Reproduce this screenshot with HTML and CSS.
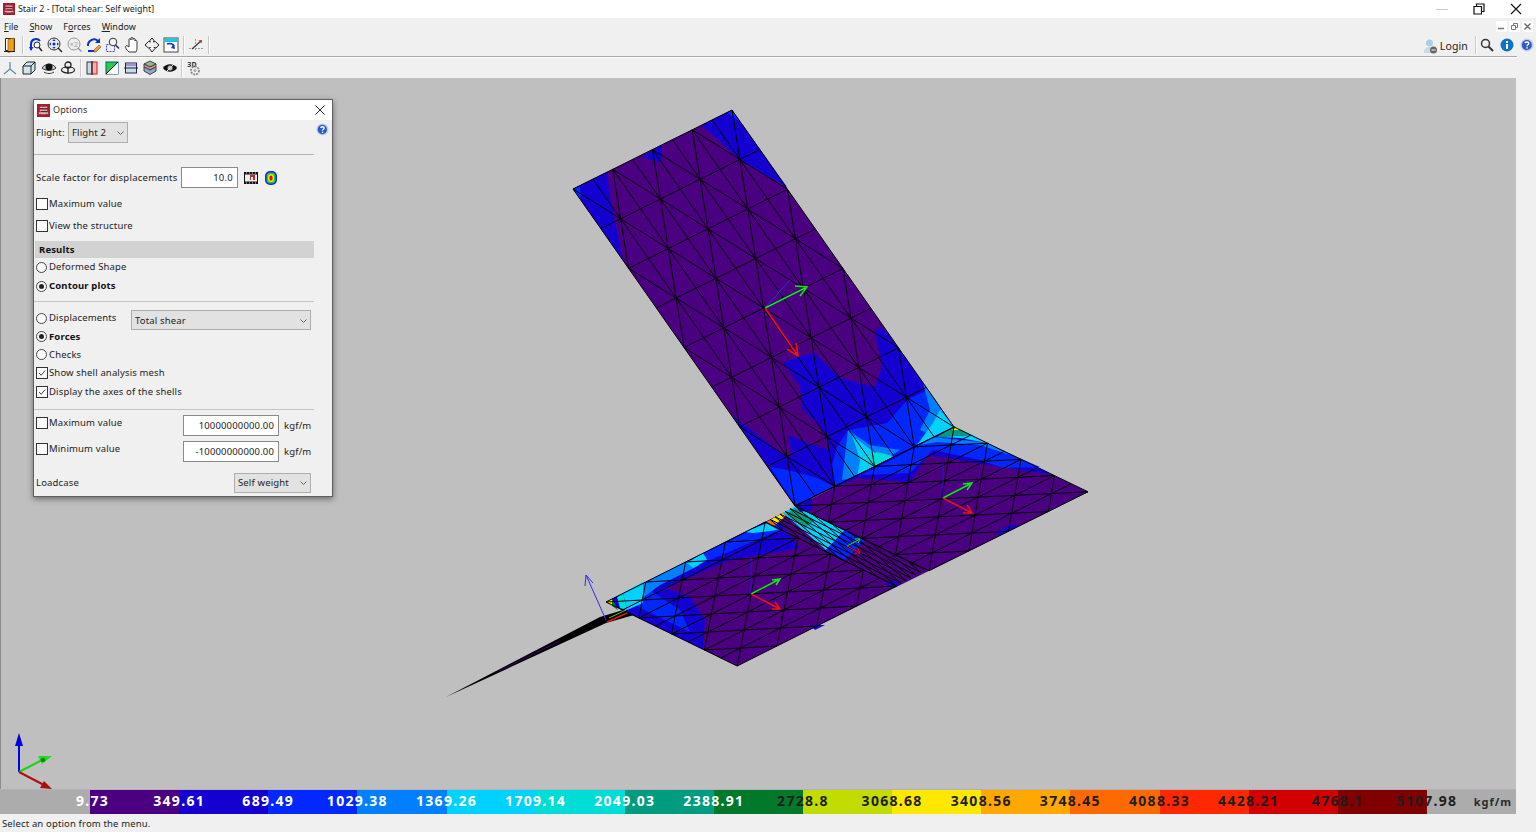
FILE: index.html
```html
<!DOCTYPE html>
<html lang="en">
<head>
<meta charset="utf-8">
<title>Stair 2 - [Total shear: Self weight]</title>
<link rel="stylesheet" href="styles.css">
</head>
<body>
<svg class="defs" aria-hidden="true">
  <symbol id="i-app" viewBox="0 0 14 14">
    <rect width="14" height="14" fill="#a91c2c"/>
    <path d="M3 3h8v2H3zM3 6h8v2H3zM2 9h10v2H2z" fill="#d9b9bb"/>
    <path d="M3 5h8M4 8h7M3 11h1M10 11h1" stroke="#521017" fill="none"/>
  </symbol>
  <symbol id="i-help" viewBox="0 0 14 14">
    <circle cx="7" cy="7" r="6.5" fill="#c3cde6"/>
    <circle cx="6.8" cy="7" r="5" fill="#2a5cc8"/>
    <path d="M5 5.2c.3-1.600 3.800-1.600 3.800.3 0 1.300-1.800 1.300-1.800 2.700" stroke="#fff" stroke-width="1.400" fill="none"/>
    <rect x="6.300" y="9.200" width="1.400" height="1.400" fill="#fff"/>
  </symbol>
  <symbol id="i-check" viewBox="0 0 12 12">
    <path d="M2.500 6l2.500 2.700L9.800 3" fill="none" stroke="#333" stroke-width="1.100"/>
  </symbol>
  <symbol id="i-chev" viewBox="0 0 9 6">
    <path d="M1.500 1.500l3 3 3-3" fill="none" stroke="#666" stroke-width="1"/>
  </symbol>
</svg>

<header class="titlebar">
  <svg class="app-icon"><use href="#i-app"/></svg>
  <span class="title-text">Stair 2 - [Total shear: Self weight]</span>
  <div class="win-controls">
    <span class="win-btn"><svg width="12" height="12" viewBox="0 0 12 12"><path d="M0 6.500h12" stroke="#c8c8c8"/></svg></span>
    <span class="win-btn"><svg width="12" height="12" viewBox="0 0 12 12"><path d="M1 3.500h7.500V11H1zM3.500 3V1H11v7.500H9" fill="none" stroke="#111" stroke-width="1.200"/></svg></span>
    <span class="win-btn"><svg width="12" height="12" viewBox="0 0 12 12"><path d="M1 1l10 10M11 1L1 11" stroke="#111" stroke-width="1.100"/></svg></span>
  </div>
</header>

<nav class="menubar">
  <span class="menu-item"><u>F</u>ile</span>
  <span class="menu-item"><u>S</u>how</span>
  <span class="menu-item">F<u>o</u>rces</span>
  <span class="menu-item"><u>W</u>indow</span>
  <div class="mdi-controls">
    <span class="mdi-btn"><svg width="7" height="7" viewBox="0 0 7 7"><path d="M0 5.500h6" stroke="#777" stroke-width="1.500"/></svg></span>
    <span class="mdi-btn"><svg width="7" height="7" viewBox="0 0 7 7"><path d="M.5 2.500h4v4h-4zM2.500 2V.5h4v4H5" fill="none" stroke="#777"/></svg></span>
    <span class="mdi-btn"><svg width="7" height="7" viewBox="0 0 7 7"><path d="M.5.500l6 6M6.500.500l-6 6" stroke="#666" stroke-width="1.300"/></svg></span>
  </div>
</nav>

<div class="toolbar toolbar-one">
  <span class="tool"><svg width="16" height="16" viewBox="0 0 16 16"><path d="M3.500 1.500h9v12h-9z" fill="#fff" stroke="#222"/><path d="M6 2.500l6-1.500v13l-6 1.500z" fill="#f0a020" stroke="#a06000" stroke-width=".8"/><path d="M2 14.500h11" stroke="#222"/></svg></span>
  <span class="tool-sep"></span>
  <span class="tool"><svg width="16" height="16" viewBox="0 0 16 16"><path d="M3 13V7a5 5 0 0 1 9-3" fill="none" stroke="#0a2fd0" stroke-width="2"/><path d="M1 10l2 4 2.500-4z" fill="#0a2fd0"/><circle cx="9" cy="8" r="3" fill="#fff" stroke="#222"/><path d="M11 10.500l3 3.500" stroke="#222" stroke-width="1.500"/></svg></span>
  <span class="tool"><svg width="16" height="16" viewBox="0 0 16 16"><circle cx="7" cy="7" r="6" fill="#e8e8e8" stroke="#333"/><path d="M7 2l1.500 2h-3zM7 12l1.500-2h-3zM2 7l2-1.500v3zM12 7l-2-1.500v3z" fill="#0a2fd0"/><circle cx="7" cy="7" r="1.500" fill="#0a2fd0"/><path d="M11 11l4 4" stroke="#222" stroke-width="1.500"/></svg></span>
  <span class="tool"><svg width="16" height="16" viewBox="0 0 16 16"><circle cx="7" cy="7" r="6" fill="#eee" stroke="#999"/><text x="7" y="9.500" class="tool-glyph">×2</text><path d="M11 11l3.500 3.500" stroke="#999" stroke-width="1.500"/></svg></span>
  <span class="tool"><svg width="16" height="16" viewBox="0 0 16 16"><path d="M2 9a6 6 0 0 1 10-5" fill="none" stroke="#0a2fd0" stroke-width="2"/><path d="M14 1v5h-5z" fill="#0a2fd0"/><path d="M2 14h6" stroke="#0a2fd0" stroke-width="2"/><path d="M8 13l5-5 2 2-5 5H8z" fill="#e0a040" stroke="#a05020" stroke-width=".6"/></svg></span>
  <span class="tool"><svg width="16" height="16" viewBox="0 0 16 16"><rect x="1.500" y="7.500" width="8" height="7" fill="none" stroke="#3a50d0" stroke-dasharray="2 1"/><circle cx="8" cy="5" r="3.800" fill="#f4f4f4" stroke="#333"/><path d="M10.500 8l3.500 3.500" stroke="#333" stroke-width="1.600"/></svg></span>
  <span class="tool"><svg width="16" height="16" viewBox="0 0 16 16"><path d="M5 15c-2-2-4-4-3.500-5.500S4 9 5 10V3c0-2 2-2 2 0V1.500c0-1.500 2-1.500 2 0V2.500c0-1.500 2-1.500 2 0V4c0-1.500 2-1 2 .5V11c0 2-1 4-1 4z" fill="#fff" stroke="#222" stroke-width=".9"/></svg></span>
  <span class="tool"><svg width="16" height="16" viewBox="0 0 16 16"><path d="M8 1l2.300 3-1 1 2-.5L15 8l-3 3-2-.5 1 1L8 15l-2.500-3.500 1-1-2 .5L1 8l3.500-3.500 2 .5-1-1z" fill="#f2f2f2" stroke="#222"/></svg></span>
  <span class="tool"><svg width="16" height="16" viewBox="0 0 16 16"><rect x="1" y="1" width="14" height="14" fill="#fff" stroke="#444"/><rect x="1.500" y="1.500" width="13" height="3.500" fill="#16c8e8"/><path d="M4 7c3-1 6 0 7 2" fill="none" stroke="#0a2fd0" stroke-width="1.800"/><path d="M8 11l4 1-1-5z" fill="#0a2fd0"/></svg></span>
  <span class="tool-sep tool-sep-b"></span>
  <span class="tool"><svg width="16" height="16" viewBox="0 0 16 16"><path d="M1 11.500h14" stroke="#999" stroke-dasharray="2 1"/><path d="M7.500 2v12" stroke="#999" stroke-dasharray="2 1"/><path d="M4 12l9-8" stroke="#333" stroke-width="1.200"/><path d="M10.500 3.500L14 3l-.5 3.500z" fill="#d02020"/></svg></span>
  <span class="tool-sep tool-sep-b"></span>

  <div class="toolbar-right">
    <svg class="login-icon" width="15" height="16" viewBox="0 0 15 16"><circle cx="6.500" cy="5" r="3.500" fill="#a8d0e4"/><path d="M1 15c0-5 3-6 5.500-6s5 1 5.500 3l-1 3z" fill="#c2dcea"/><circle cx="10.500" cy="12" r="3.500" fill="#666"/><path d="M8.500 12h4" stroke="#fff"/></svg>
    <span class="login-text">Login</span>
    <span class="tool-sep right-sep"></span>
    <svg class="right-icon" width="14" height="14" viewBox="0 0 14 14"><circle cx="5.500" cy="5.500" r="4" fill="none" stroke="#333" stroke-width="1.500"/><path d="M8.500 8.500l4.500 4.500" stroke="#333" stroke-width="2"/></svg>
    <svg class="right-icon" width="14" height="14" viewBox="0 0 14 14"><circle cx="7" cy="7" r="6.500" fill="#0f73c4"/><rect x="6" y="3" width="2" height="2" fill="#fff"/><rect x="6" y="6" width="2" height="5" fill="#fff"/></svg>
    <svg class="right-icon" width="14" height="14"><use href="#i-help"/></svg>
  </div>
</div>
<div class="toolbar-rule"></div>

<div class="toolbar toolbar-two">
  <span class="tool"><svg width="16" height="16" viewBox="0 0 16 16"><path d="M8 9V2M8 9l-6 5M8 9l6 5" fill="none" stroke="#5b8fa8" stroke-width="1.300"/></svg></span>
  <span class="tool"><svg width="16" height="16" viewBox="0 0 16 16"><path d="M2 6l4-4h8v8l-4 4H2z" fill="#cfe4ee" stroke="#222"/><path d="M2 6h8v8M10 6l4-4" fill="none" stroke="#222"/></svg></span>
  <span class="tool"><svg width="16" height="16" viewBox="0 0 16 16"><path d="M1 8c3-5 11-5 14 0-3 3-11 3-14 0z" fill="#d0d0d0" stroke="#333"/><circle cx="8" cy="7" r="3.500" fill="#111"/><path d="M3 12c3 2 7 2 10 0" fill="none" stroke="#333"/></svg></span>
  <span class="tool"><svg width="16" height="16" viewBox="0 0 16 16"><circle cx="8" cy="5" r="3" fill="none" stroke="#222" stroke-width="1.300"/><ellipse cx="8" cy="10" rx="6.500" ry="3" fill="none" stroke="#222" stroke-width="1.200"/><path d="M8 7v7" stroke="#222" stroke-width="1.400"/></svg></span>
  <span class="tool-sep tool-sep-c"></span>
  <span class="tool"><svg width="16" height="16" viewBox="0 0 16 16"><rect x="3" y="2" width="5" height="12" fill="#c8dce8" stroke="#335"/><rect x="8" y="2" width="5" height="12" fill="#f4b0b0" stroke="#d01818"/><path d="M8 1v14" stroke="#222"/></svg></span>
  <span class="tool"><svg width="16" height="16" viewBox="0 0 16 16"><rect x="2" y="2" width="12" height="12" fill="#22d048" stroke="#157"/><path d="M14 2L2 14h12z" fill="#fff"/><path d="M14 2L2 14" stroke="#111"/></svg></span>
  <span class="tool"><svg width="16" height="16" viewBox="0 0 16 16"><rect x="2.500" y="3" width="11" height="10" fill="#c4dce8" stroke="#225"/><rect x="3" y="3.500" width="10" height="2.500" fill="#a090d8"/><path d="M1 8h14" stroke="#222"/></svg></span>
  <span class="tool"><svg width="16" height="16" viewBox="0 0 16 16"><path d="M8 1l6 3-6 3-6-3z" fill="#90b890" stroke="#444"/><path d="M2 4v3l6 3 6-3V4l-6 3z" fill="#d89090" stroke="#444"/><path d="M2 7v4l6 3.500 6-3.500V7l-6 3z" fill="#8aa8c8" stroke="#444"/></svg></span>
  <span class="tool"><svg width="16" height="16" viewBox="0 0 16 16"><path d="M1 8c3-5 11-5 14 0-3 5-11 5-14 0z" fill="#111"/><circle cx="8" cy="8" r="2.500" fill="#bbb"/><path d="M3 13L13 3" stroke="#eee"/></svg></span>
  <span class="tool-sep tool-sep-c"></span>
  <span class="tool"><svg width="16" height="16" viewBox="0 0 16 16"><text x="6" y="7" class="tool-3d">3D</text><circle cx="9" cy="10.500" r="4" fill="none" stroke="#888" stroke-width="1.800" stroke-dasharray="2 1"/><circle cx="9" cy="10.500" r="1.500" fill="#aaa"/></svg></span>
</div>

<main class="workspace">
  <div class="viewport">
    <svg class="scene" width="1516" height="711" viewBox="0 78 1516 711" aria-label="Stair contour plot">
      <!-- upper flight -->
      <polygon class="c1" points="573,189 732,110 954,427 795,506"/>
      <polygon class="c2" points="573,189 607,172 610,197 623,260"/>
      <polygon class="c3" points="573,189 580,186 581,200"/>
      <polygon class="c2" points="642,157 662,145 662,163"/>
      <polygon class="c2" points="702,125 732,110 787,187 740,160"/>
      <polygon class="c3" points="727,113 732,110 740,122"/>
      <polygon class="c2" points="733,416 788,458 792,455 788,435 808,443 830,450 823,430 802,408 800,385 783,363 798,357 815,353 840,378 875,387 882,367 875,330 883,328 900,350 954,427 795,506"/>
      <polygon class="c3" points="770,467 795,505 835,487 815,477 787,470"/>
      <polygon class="c3" points="835,487 857,477 848,430 837,447 832,465"/>
      <polygon class="c3" points="848,430 887,423 907,400 927,390 937,423 917,445 857,477"/>
      <polygon class="c4" points="842,480 848,430 870,445 900,450 857,477"/>
      <polygon class="c4" points="923,383 954,427 935,437 920,430 930,410"/>
      <polygon class="c5" points="857,477 860,460 852,435 867,447 880,457 893,457 877,467"/>
      <polygon class="c5" points="917,445 933,437 954,427 940,410 933,423"/>
      <polygon class="c6" points="863,458 877,452 893,456 875,466"/>

      <!-- landing -->
      <polygon class="c1" points="606,602 954,427 1088,492 737,666"/>
      <polygon class="c2" points="606,602 775,517 800,548 730,560 665,588 690,597 705,620 703,649"/>
      <polygon class="c3" points="620,595 775,518 780,530 710,560 670,578 650,590 680,610 690,632 640,608"/>
      <polygon class="c4" points="625,592 690,560 700,565 660,585 640,600"/>
      <polygon class="c5" points="623,593 643,582 643,603 627,610"/>
      <polygon class="c5" points="687,563 703,553 707,560 693,568"/>
      <polygon class="c5" points="745,532 767,523 778,530 753,533"/>
      <polygon class="c8" points="606,602 612,599 618,610 612,606"/>
      <polygon class="c10" points="606,602 612,599 612,606"/>
      <polygon class="c6" points="617,597 623,593 627,610 620,608"/>
      <polygon class="c12" points="766,522 770,520 776,525 772,526"/>
      <polygon class="c10" points="770,520 783,513 786,516 776,524"/>
      <polygon class="c5" points="783,513 795,506 845,530 826,550"/>
      <polygon class="c7" points="786,514 795,508 815,520 805,528"/>
      <polygon class="c3" points="826,550 845,530 865,540 845,560"/>
      <polygon class="c2" points="795,506 954,427 1053,475 977,463 928,455 910,482 857,478 812,497 812,510 800,512"/>
      <polygon class="c3" points="857,477 917,447 937,437 983,442 1040,467 1003,468 980,460 933,450 910,473 863,475"/>
      <polygon class="c4" points="920,445 933,437 987,443 1010,455 980,445 937,442"/>
      <polygon class="c5" points="937,437 972,435 987,443 960,438"/>
      <polygon class="c7" points="937,437 954,426 972,435"/>
      <polygon class="c10" points="952,430 956,427 961,430"/>
      <polygon class="c2" points="995,533 1010,525 1020,525 1000,535"/>
      <polygon class="c2" points="885,583 893,588 900,584 892,580"/>
      <polygon class="c2" points="810,625 825,625 815,630"/>
      <g id="mesh" class="mesh"></g>

      <!-- edge sliver -->
      <polygon class="sliver" points="446,697 600,617 623,610 634,615 606,623"/>
      <path class="sliver-hint" d="M500 670.500L560 641"/>

      <!-- local axes -->
      <g class="axes-local">
        <path class="ax-b" d="M765 308L790 280"/>
        <path class="ax-g bold" d="M765 308L807 287M795 286l12 1-7 9"/>
        <path class="ax-r bold" d="M765 308L798 356M796 343l2 13-11-7"/>
        <path class="ax-b thin" d="M943 498V463"/>
        <path class="ax-g bold" d="M943 498L972 483M963 484l9-1-5 7"/>
        <path class="ax-r bold" d="M943 498L972 513M967 505l5 8-9 0"/>
        <path class="ax-b thin" d="M847 546V530"/>
        <path class="ax-g" d="M847 546L860 539M855 539l5 0-2 4"/>
        <path class="ax-r" d="M847 546L860 553M858 549l2 4-5 0"/>
        <path class="ax-b thin" d="M751 594V558"/>
        <path class="ax-g bold" d="M751 594L780 579M772 580l8-1-4 6"/>
        <path class="ax-r bold" d="M751 594L780 609M775 602l5 7-8 0"/>
        <path class="ax-r bold" d="M607 622L627 613"/>
        <path class="ax-g" d="M609 618L626 610"/>
        <path class="ax-b" d="M606 620L586 575M585 586l1-11 7 8"/>
      </g>

      <!-- global axes -->
      <path class="gax gax-b" d="M19 772V738"/>
      <path class="gax-bf" d="M15 746L19 733L23 746z"/>
      <path class="gax gax-g" d="M19 772L44 759"/>
      <path class="gax-gf" d="M38 756L52 756L42 764z"/>
      <ellipse class="gax-gd" cx="43" cy="760" rx="2.500" ry="2"/>
      <path class="gax gax-r" d="M19 772L44 785"/>
      <path class="gax-rf" d="M40 788L44 781L52 789z"/>
    </svg>

    <section class="dialog">
      <div class="dialog-title">
        <svg class="app-icon dialog-icon"><use href="#i-app"/></svg>
        <span class="dialog-title-text">Options</span>
        <svg class="dialog-close" width="10" height="10" viewBox="0 0 10 10"><path d="M.5.500l9 9M9.500.500l-9 9" stroke="#222" stroke-width="1"/></svg>
      </div>
      <svg class="dialog-help" width="13" height="13"><use href="#i-help"/></svg>
      <div class="dialog-body">
        <div class="row row-flight">
          <span class="flight-label">Flight:</span>
          <div class="combo combo-flight"><span>Flight 2</span><svg width="9" height="6"><use href="#i-chev"/></svg></div>
        </div>
        <div class="rule rule-a"></div>
        <div class="row row-scale">
          <span class="scale-label">Scale factor for displacements</span>
          <div class="field field-scale">10.0</div>
          <svg class="film-icon" width="14" height="12" viewBox="0 0 14 12"><rect width="14" height="12" fill="#111"/><rect x="1" y="2.500" width="12" height="7" fill="#eee"/><path d="M2 1h1M5 1h1M8 1h1M11 1h1M2 11h1M5 11h1M8 11h1M11 11h1" stroke="#eee"/><path d="M6 3h5v5H9V5H7v3H6z" fill="#b03030"/></svg>
          <svg class="contour-icon" width="12" height="14" viewBox="0 0 12 14"><rect width="12" height="14" rx="5" fill="#0a30e0"/><rect x="1.500" y="1.500" width="9" height="11" rx="4" fill="#20c840"/><rect x="3" y="3" width="6" height="8" rx="3" fill="#f0e000"/><rect x="4.500" y="4.500" width="3" height="5" rx="1.500" fill="#e01010"/></svg>
        </div>
        <label class="opt opt-max"><span class="chk"></span>Maximum value</label>
        <label class="opt opt-view"><span class="chk"></span>View the structure</label>
        <div class="results-band">Results</div>
        <label class="opt"><span class="radio"></span>Deformed Shape</label>
        <label class="opt opt-contour strong"><span class="radio on"></span>Contour plots</label>
        <div class="rule rule-b"></div>
        <div class="group">
          <div class="group-left">
            <label class="opt"><span class="radio"></span>Displacements</label>
            <label class="opt strong"><span class="radio on"></span>Forces</label>
            <label class="opt"><span class="radio"></span>Checks</label>
            <label class="opt"><span class="chk"><svg width="10" height="10"><use href="#i-check"/></svg></span>Show shell analysis mesh</label>
            <label class="opt"><span class="chk"><svg width="10" height="10"><use href="#i-check"/></svg></span>Display the axes of the shells</label>
          </div>
          <div class="combo combo-result"><span>Total shear</span><svg width="9" height="6"><use href="#i-chev"/></svg></div>
        </div>
        <div class="rule rule-c"></div>
        <div class="row-limit row-limit-max">
          <label class="opt limit-label"><span class="chk"></span>Maximum value</label>
          <div class="field field-limit">10000000000.00</div>
          <span class="unit">kgf/m</span>
        </div>
        <div class="row-limit row-limit-min">
          <label class="opt limit-label"><span class="chk"></span>Minimum value</label>
          <div class="field field-limit">-10000000000.00</div>
          <span class="unit">kgf/m</span>
        </div>
        <div class="row row-load">
          <span class="load-label">Loadcase</span>
          <div class="combo combo-load"><span>Self weight</span><svg width="9" height="6"><use href="#i-chev"/></svg></div>
        </div>
      </div>
    </section>
  </div>
  <div class="right-strip"></div>
</main>

<div class="legend">
  <div class="legend-end legend-start"></div>
  <div class="seg s1"><b class="lab lab-first">9.73</b></div>
  <div class="seg s2"><b class="lab">349.61</b></div>
  <div class="seg s3"><b class="lab">689.49</b></div>
  <div class="seg s4"><b class="lab">1029.38</b></div>
  <div class="seg s5"><b class="lab">1369.26</b></div>
  <div class="seg s6"><b class="lab">1709.14</b></div>
  <div class="seg s7"><b class="lab">2049.03</b></div>
  <div class="seg s8"><b class="lab">2388.91</b></div>
  <div class="seg s9"><b class="lab dark">2728.8</b></div>
  <div class="seg s10"><b class="lab dark">3068.68</b></div>
  <div class="seg s11"><b class="lab dark">3408.56</b></div>
  <div class="seg s12"><b class="lab dark">3748.45</b></div>
  <div class="seg s13"><b class="lab dark">4088.33</b></div>
  <div class="seg s14"><b class="lab dark">4428.21</b></div>
  <div class="seg s15"><b class="lab dark">4768.1</b></div>
  <div class="legend-end legend-stop"><b class="lab dark">5107.98</b><span class="legend-unit">kgf/m</span></div>
</div>

<footer class="statusbar">Select an option from the menu.</footer>
<script src="mesh.js"></script>
</body>
</html>
```
FILE: styles.css
```css
* { box-sizing: border-box; }
html, body { margin: 0; height: 100%; }
body {
  width: 1536px; height: 832px; overflow: hidden;
  display: flex; flex-direction: column;
  background: #f0f0f0; color: #222;
  font: 9.5px/1 "Noto Sans", "Liberation Sans", sans-serif;
  letter-spacing: .15px;
}
.defs { position: absolute; width: 0; height: 0; }
.app-icon { width: 12px; height: 12px; display: block; }

.titlebar { height: 18px; background: #fff; display: flex; align-items: center; padding-left: 3px; }
.title-text { margin-left: 3px; padding-top: 1px; font-size: 8.9px; letter-spacing: 0; }
.win-controls { margin-left: auto; display: flex; padding-right: 2px; }
.win-btn { width: 37px; height: 18px; display: flex; align-items: center; justify-content: center; }

.menubar { height: 18px; display: flex; align-items: center; position: relative; padding: 0 0 2px 4px; gap: 11px; font-size: 9px; letter-spacing: 0; }
.mdi-controls { margin-left: auto; margin-right: 3px; display: flex; gap: 2px; }
.mdi-btn { width: 11px; height: 11px; background: #fff; display: flex; align-items: center; justify-content: center; }

.toolbar { height: 20px; display: flex; align-items: center; padding-left: .5px; }
.tool { width: 19.3px; height: 20px; display: flex; align-items: center; justify-content: center; flex: none; }
.tool svg { display: block; }
.tool-glyph { font: 7px "Noto Sans", sans-serif; fill: #999; text-anchor: middle; }
.tool-3d { font: bold 7px "Noto Sans", sans-serif; fill: #333; text-anchor: middle; }
.tool-sep { width: 2px; height: 18px; flex: none; border-left: 1px solid #c8c8c8; border-right: 1px solid #fff; margin: 0 2px 0 3px; }
.tool-sep-b { margin: 0 2px; }
.tool-sep-c { margin: 0 1px 0 2px; }
.toolbar-one { padding: 0 0 2px 0; }
.toolbar-right { margin-left: auto; display: flex; align-items: center; padding-right: 2px; }
.login-icon { margin-top: 2px; }
.login-text { font-size: 10.5px; margin: 3px 0 0 2px; }
.right-sep { margin: 0 3px 0 7px; }
.right-icon { margin-right: 6px; display: block; }
.right-icon:last-child { margin-right: 0; }
.toolbar-rule { height: 2px; margin-right: 19px; border-top: 1px solid #a8a8a8; border-bottom: 1px solid #fdfdfd; }

.workspace { flex: 1; display: flex; min-height: 0; }
.viewport { width: 1516px; flex: none; background: #bfbfbf; position: relative; overflow: hidden; border-left: 1px solid #8c8c8c; }
.right-strip { flex: 1; }
.scene { display: block; position: absolute; left: -1px; top: 0; }

.c1 { fill: #4b0082; } .c2 { fill: #1500d2; } .c3 { fill: #0028ff; } .c4 { fill: #0080ff; }
.c5 { fill: #00d2ff; } .c6 { fill: #00dcd6; } .c7 { fill: #009c80; } .c8 { fill: #007a2a; }
.c10 { fill: #ffe800; } .c12 { fill: #ff6a00; }
.mesh line { stroke: #000; stroke-width: 1; }
.sliver { fill: #000; }
.sliver-hint { stroke: #3c0070; stroke-width: 1; fill: none; }
.axes-local path { fill: none; stroke-width: 1; }
.ax-b { stroke: #2d2df0; }
.ax-b.thin { stroke: #2020d8; stroke-width: .8; }
.ax-g { stroke: #12e812; }
.ax-r { stroke: #f01010; }
.axes-local .bold { stroke-width: 1.500; }
.gax { fill: none; stroke-width: 2; }
.gax-b { stroke: #0000e0; } .gax-g { stroke: #12d812; } .gax-r { stroke: #b01010; }
.gax-bf { fill: #0000e0; } .gax-gf { fill: #20dc20; } .gax-gd { fill: #0a8a0a; } .gax-rf { fill: #a81010; }

.dialog {
  position: absolute; left: 32px; top: 21px; width: 300px; height: 398px;
  background: #f0f0f0; border: 1px solid #5f5f5f;
  box-shadow: 0 2px 6px rgba(0,0,0,.45);
}
.dialog-title { height: 20px; background: #fff; display: flex; align-items: center; padding-left: 3px; }
.dialog-icon { width: 13px; height: 13px; }
.dialog-title-text { margin-left: 3px; padding-bottom: 2px; color: #333; font-size: 9px; }
.dialog-close { margin-left: auto; margin-right: 7px; }
.dialog-help { position: absolute; left: 282px; top: 23px; }
.dialog-body { padding-left: 2px; }

.row { display: flex; align-items: center; }
.rule { height: 1px; width: 280px; margin-left: -2px; background: #b4b4b4; }
.rule-b, .rule-c { background: #c4c4c4; }

.combo { background: #e2e2e2; border: 1px solid #adadad; display: flex; align-items: center; justify-content: space-between; padding: 0 2px 0 3px; }
.field { background: #fff; border: 1px solid #8a8a8a; text-align: right; padding-right: 4px; line-height: 19px; }

.row-flight { height: 21px; margin-top: 2px; }
.flight-label { width: 32px; }
.combo-flight { width: 60px; height: 21px; }
.rule-a { margin-top: 11px; }
.row-scale { height: 21px; margin-top: 12px; letter-spacing: .25px; }
.scale-label { width: 145px; }
.field-scale { width: 57px; height: 21px; }
.film-icon { margin-left: 6px; }
.contour-icon { margin-left: 7px; }

.opt { display: flex; align-items: center; height: 18px; white-space: nowrap; }
.opt-max { margin-top: 7px; }
.opt-view { margin-top: 4px; }
.opt-contour { margin-top: 1px; }
.strong { font-weight: 700; color: #111; }
.chk { width: 12px; height: 12px; border: 1px solid #333; background: #fbfbfb; margin-right: 1px; flex: none; display: flex; align-items: center; justify-content: center; }
.radio { width: 11px; height: 11px; border: 1px solid #444; border-radius: 50%; background: #fbfbfb; margin: 0 2px 0 0; flex: none; position: relative; }
.radio.on::after { content: ""; position: absolute; left: 2px; top: 2px; width: 5px; height: 5px; border-radius: 50%; background: #222; }

.results-band { height: 17px; width: 279px; margin: 6px 0 0 -1px; padding-left: 4px; background: #d2d2d2; font-weight: 700; color: #111; display: flex; align-items: center; }

.rule-b { margin-top: 6px; }
.group { display: flex; margin-top: 7px; align-items: flex-start; }
.group-left { width: 95px; display: flex; flex-direction: column; gap: .4px; }
.combo-result { width: 180px; height: 20px; margin-top: 1px; padding-top: 2px; }
.rule-c { margin-top: 8px; }

.row-limit { display: flex; align-items: flex-start; height: 21px; }
.row-limit-max { margin-top: 5px; }
.row-limit-min { margin-top: 5px; }
.limit-label { width: 147px; height: 16px; }
.field-limit { width: 96px; height: 21px; }
.unit { margin-left: 5px; margin-top: 6px; }

.row-load { height: 20px; margin-top: 11px; }
.load-label { width: 198px; padding-top: 1px; }
.combo-load { width: 77px; height: 20px; }

.legend { height: 25px; width: 1516px; display: flex; flex: none; background: #acacac; border-top: 1px solid #b8b0b8; }
.legend-start { width: 90px; flex: none; }
.legend-stop { flex: 1; position: relative; }
.seg { width: 89.130px; flex: none; position: relative; }
.lab { position: absolute; left: 0; top: 11px; transform: translate(-50%, -50%); color: #fff; font: bold 14px/1 "Noto Sans", "Liberation Sans", sans-serif; letter-spacing: 1.3px; white-space: nowrap; }
.lab-first { margin-left: 2.500px; }
.lab.dark { color: #1e1e1e; }
.legend-unit { position: absolute; right: 4px; top: 6px; font: bold 11px/1 "Noto Sans", sans-serif; letter-spacing: 1px; color: #2a2a2a; }
.s1 { background: #4b0082; } .s2 { background: #1500d2; } .s3 { background: #0028ff; }
.s4 { background: #0080ff; } .s5 { background: #00d2ff; } .s6 { background: #00dcd6; }
.s7 { background: #009c80; } .s8 { background: #007a2a; } .s9 { background: #c2dc00; }
.s10 { background: #ffe800; } .s11 { background: #ffa800; } .s12 { background: #ff6a00; }
.s13 { background: #ff2800; } .s14 { background: #d20000; } .s15 { background: #800000; }

.statusbar { height: 18px; display: flex; align-items: center; padding: 2px 0 0 2px; }
```
FILE: mesh.js
```js
// Draws the analysis-mesh edges of the three shell pieces over the contour fills.
(function () {
  var NS = "http://www.w3.org/2000/svg";
  var g = document.getElementById("mesh");
  function line(a, b) {
    var l = document.createElementNS(NS, "line");
    l.setAttribute("x1", a[0].toFixed(1)); l.setAttribute("y1", a[1].toFixed(1));
    l.setAttribute("x2", b[0].toFixed(1)); l.setAttribute("y2", b[1].toFixed(1));
    g.appendChild(l);
  }
  function corner(o, u, v) {
    return function (i, j) { return [o[0] + i * u[0] + j * v[0], o[1] + i * u[1] + j * v[1]]; };
  }
  // upper flight: rows, columns and alternating diagonals
  var p = corner([573, 189], [19.875, -9.875], [27.75, 39.625]);
  for (var i = 0; i <= 8; i++) for (var j = 0; j <= 8; j++) {
    if (i < 8) line(p(i, j), p(i + 1, j));
    if (j < 8) line(p(i, j), p(i, j + 1));
    if (i < 8 && j < 8) {
      if ((i + j) % 2 === 0) line(p(i, j), p(i + 1, j + 1));
      else line(p(i + 1, j), p(i, j + 1));
    }
  }
  // landing, either side of the refined strip: no column lines inside the piece
  function landing(q) {
    for (var i = 0; i <= 8; i++) for (var j = 0; j <= 8; j++) {
      if (i < 8) line(q(i, j), q(i + 1, j));
      if (j < 8 && (i === 0 || i === 8)) line(q(i, j), q(i, j + 1));
      if (i < 8 && j < 8) {
        if ((i + j) % 2 === 0) line(q(i, j), q(i + 1, j + 1));
        else line(q(i + 1, j), q(i, j + 1));
      }
    }
  }
  landing(corner([606, 602], [19.9, -10], [16.4, 8]));
  landing(corner([795, 506], [19.875, -9.875], [16.75, 8.1]));
  // refined strip
  var n = 6, m = 7;
  for (var k = 0; k <= n; k++) {
    var ax = 765 + k * 5, ay = 522 - k * 2.67;
    line([ax, ay], [ax + 131, ay + 64]);
    if (k < n) for (var s = 0; s < m; s++) {
      var t0 = s / m, t1 = (s + 1) / m;
      line([ax + 131 * t0 + 5, ay + 64 * t0 - 2.67], [ax + 131 * t1, ay + 64 * t1]);
    }
  }
})();
```
